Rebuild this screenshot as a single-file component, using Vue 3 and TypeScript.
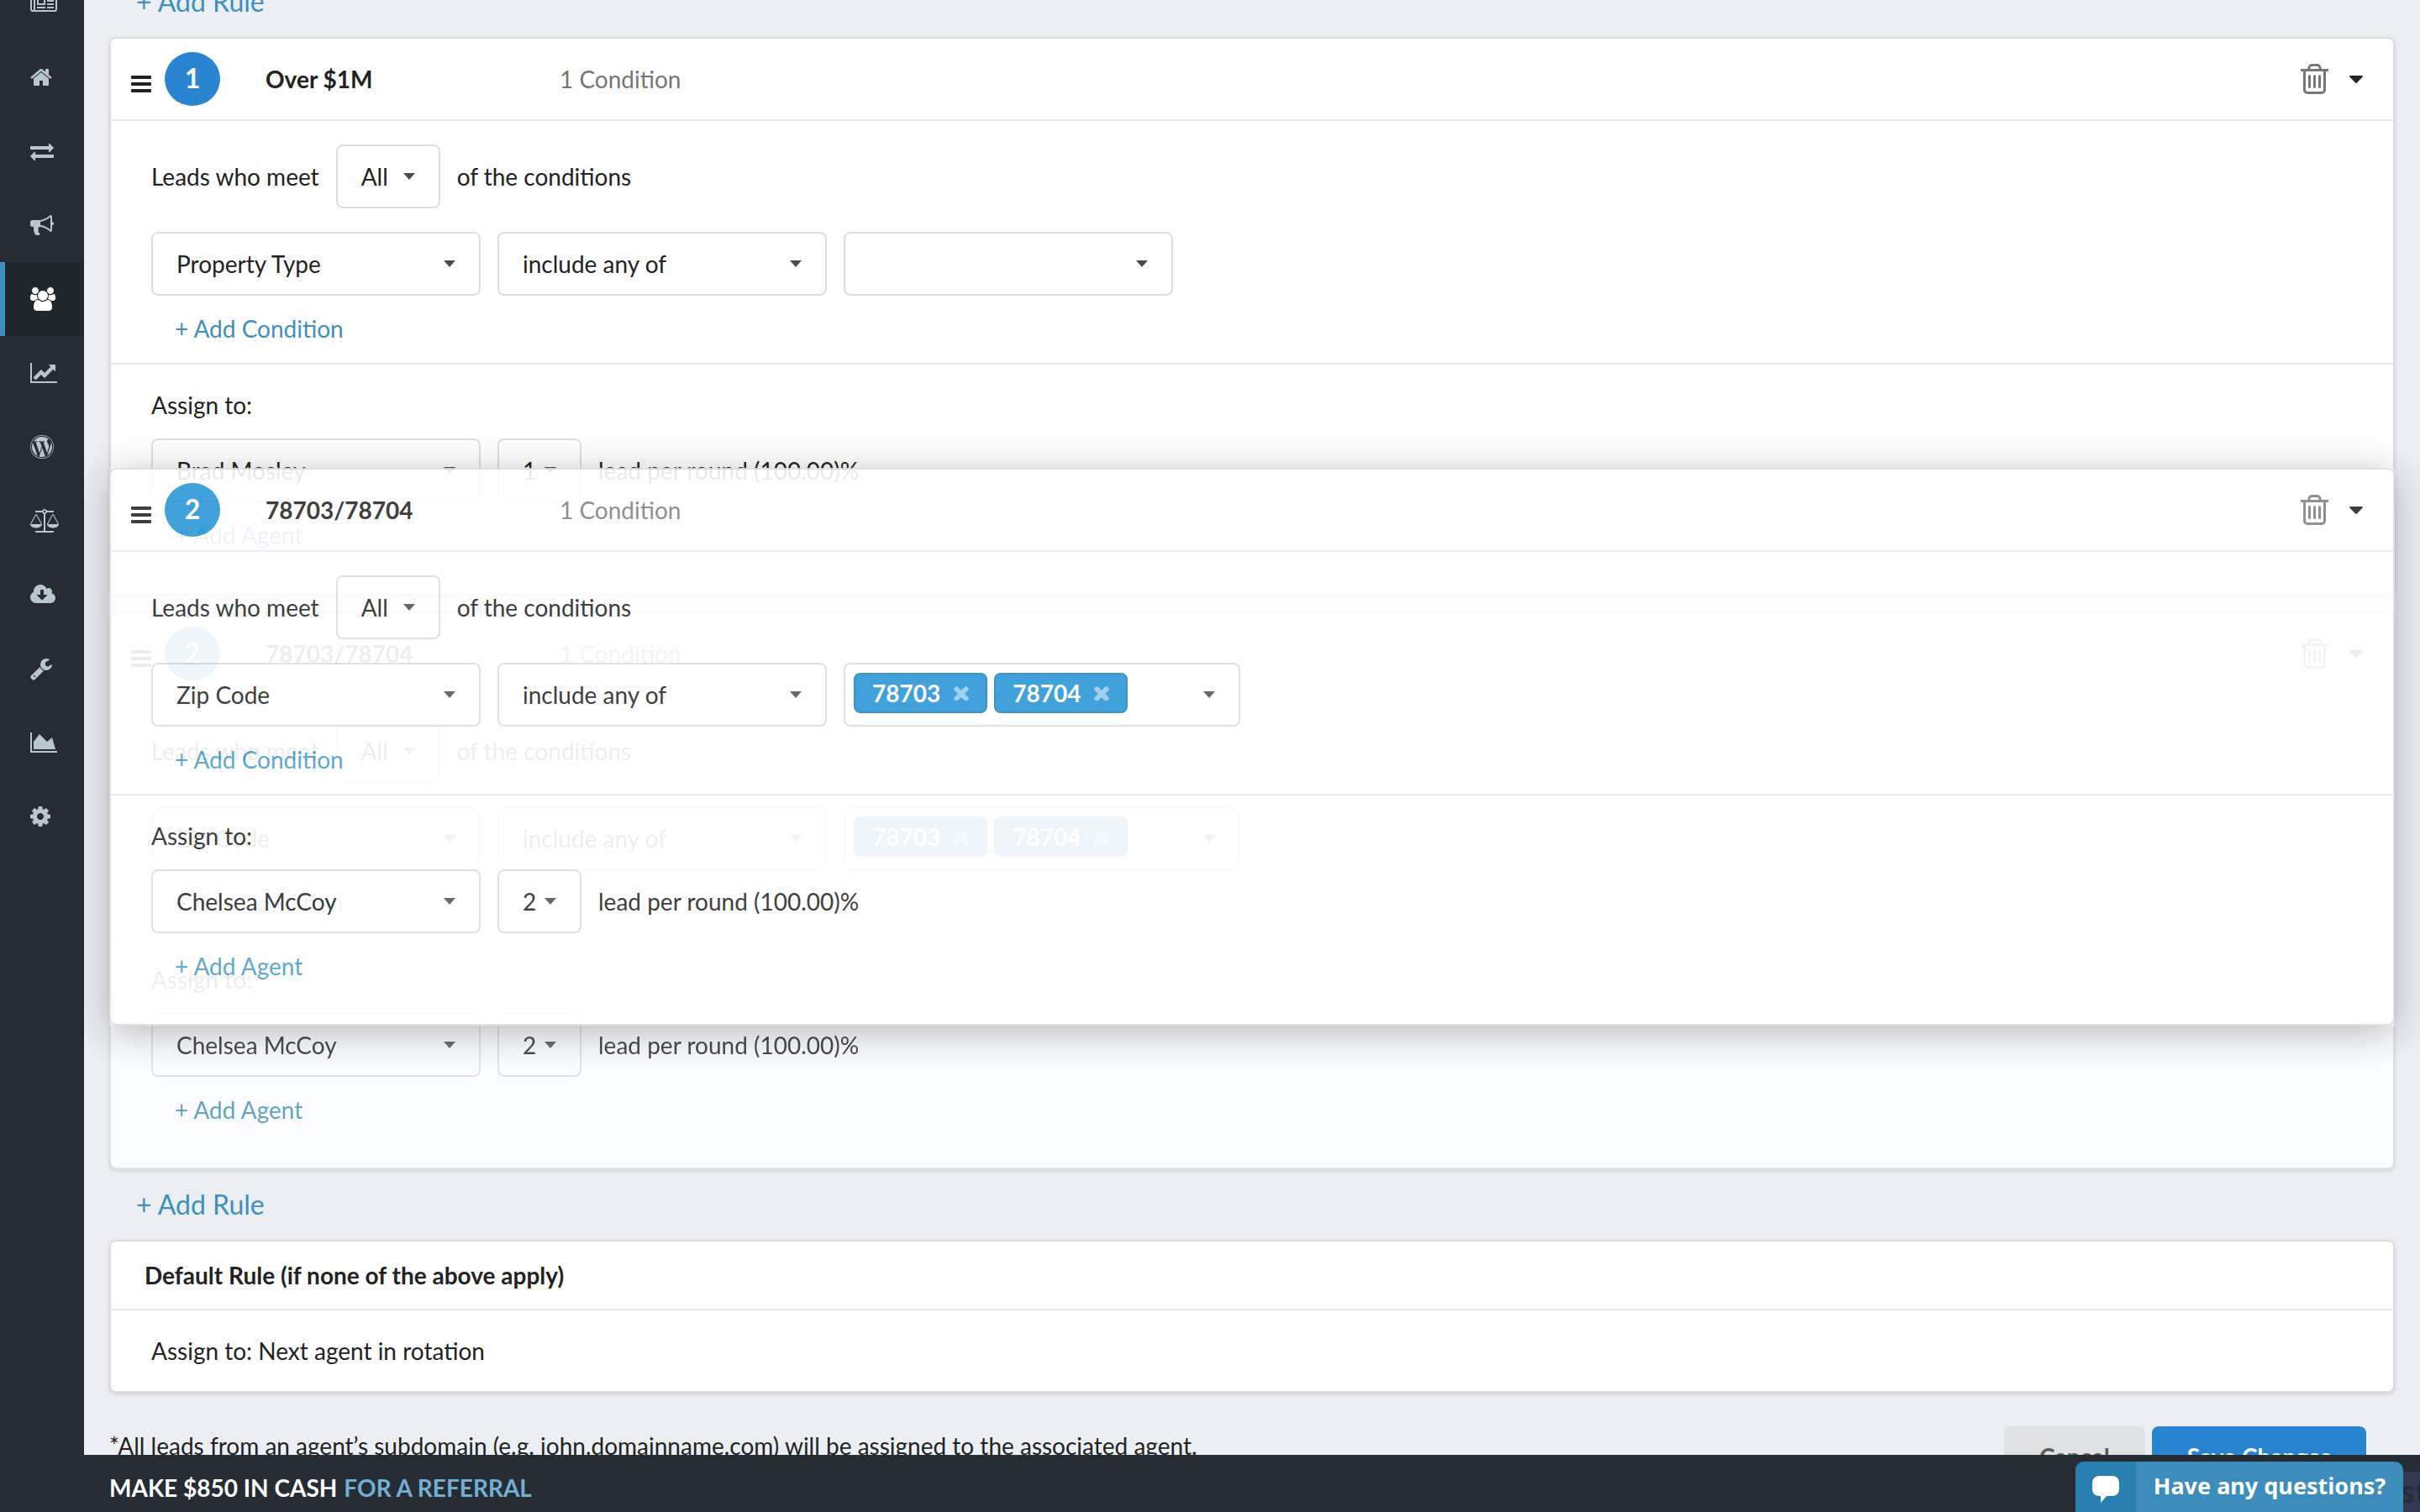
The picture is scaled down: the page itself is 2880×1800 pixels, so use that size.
<script setup lang="ts">
interface NavIcon {
  name: string
  box: string
  width: number
  path: string
  active?: boolean
}

interface Rule {
  key: string
  number: number
  title: string
  field: string
  operator: string
  tags: string[]
  agent: string
  weight: string
  state: 'idle' | 'placeholder' | 'dragging'
  top?: number
}

const icons: NavIcon[] = [
  {
    name: 'News',
    box: '0 0 2048 1792',
    width: 32,
    path: 'M1024 512h-384v384h384v-384zm128 640v128h-640v-128h640zm0-768v640h-640v-640h640zm640 768v128h-512v-128h512zm0-256v128h-512v-128h512zm0-256v128h-512v-128h512zm0-256v128h-512v-128h512zm-1536 960v-960h-128v960q0 26 19 45t45 19 45-19 19-45zm1664 0v-1088h-1536v1088q0 33-11 64h1483q26 0 45-19t19-45zm128-1216v1216q0 80-56 136t-136 56h-1664q-80 0-136-56t-56-136v-1088h256v-128h1792z',
  },
  {
    name: 'Home',
    box: '64 0 1664 1792',
    width: 26,
    path: 'M1472 992v480q0 26-19 45t-45 19h-384v-384h-256v384h-384q-26 0-45-19t-19-45v-480q0-1 .5-3t.5-3l575-474 575 474q1 2 1 6zm223-69l-62 74q-8 9-21 11h-3q-13 0-21-7l-692-577-692 577q-12 8-24 7-13-2-21-11l-62-74q-8-10-7-23.5t11-21.5l719-599q32-26 76-26t76 26l244 204v-195q0-14 9-23t23-9h192q14 0 23 9t9 23v408l219 182q10 8 11 21.5t-7 23.5z',
  },
  {
    name: 'Transactions',
    box: '0 0 1792 1792',
    width: 28,
    path: 'M1792 1184v192q0 13-9.5 22.5t-22.5 9.5h-1376v192q0 13-9.5 22.5t-22.5 9.5q-12 0-24-10l-319-320q-9-9-9-22 0-14 9-23l320-320q9-9 23-9 13 0 22.5 9.5t9.5 22.5v192h1376q13 0 22.5 9.5t9.5 22.5zm0-544q0 14-9 23l-320 320q-9 9-23 9-13 0-22.5-9.5t-9.5-22.5v-192h-1376q-13 0-22.5-9.5t-9.5-22.5v-192q0-13 9.5-22.5t22.5-9.5h1376v-192q0-14 9-23t23-9q12 0 24 10l319 319q9 9 9 23z',
  },
  {
    name: 'Campaigns',
    box: '0 0 1792 1792',
    width: 28,
    path: 'M1664 640q53 0 90.5 37.5t37.5 90.5-37.5 90.5-90.5 37.5v384q0 52-38 90t-90 38q-417-347-812-380-58 19-91 66t-31 100.5 40 92.5q-20 33-23 65.5t6 58 33.5 55 48 50 61.5 50.5q-29 58-111.5 83t-168.5 11.5-132-55.5q-7-23-29.5-87.5t-32-94.5-23-89-15-101 3.5-98.5 22-110.5h-122q-66 0-113-47t-47-113v-192q0-66 47-113t113-47h480q435 0 896-384 52 0 90 38t38 90v384zm-128 604v-954q-394 302-768 343v270q377 42 768 341z',
  },
  {
    name: 'Leads',
    box: '64 0 1920 1792',
    width: 30,
    active: true,
    path: 'M657 896q-162 5-265 128h-134q-82 0-138-40.5t-56-118.5q0-353 124-353 6 0 43.5 21t97.5 42.5 119 21.5q67 0 133-23-5 37-5 66 0 139 81 256zm1071 637q0 120-73 189.5t-194 69.5h-874q-121 0-194-69.5t-73-189.5q0-53 3.5-103.5t14-109 26.5-108.5 43-97.5 62-81 85.5-53.5 111.5-20q10 0 43 21.5t73 48 107 48 135 21.5 135-21.5 107-48 73-48 43-21.5q61 0 111.5 20t85.5 53.5 62 81 43 97.5 26.5 108.5 14 109 3.5 103.5zm-1024-1277q0 106-75 181t-181 75-181-75-75-181 75-181 181-75 181 75 75 181zm704 384q0 159-112.5 271.5t-271.5 112.5-271.5-112.5-112.5-271.5 112.5-271.5 271.5-112.5 271.5 112.5 112.5 271.5zm576 225q0 78-56 118.5t-138 40.5h-134q-103-123-265-128 81-117 81-256 0-29-5-66 66 23 133 23 59 0 119-21.5t97.5-42.5 43.5-21q124 0 124 353zm-128-609q0 106-75 181t-181 75-181-75-75-181 75-181 181-75 181 75 75 181z',
  },
  {
    name: 'Analytics',
    box: '0 0 2048 1792',
    width: 32,
    path: 'M2048 1536v128h-2048v-1536h128v1408h1920zm-128-1248v435q0 21-19.5 29.5t-35.5-7.5l-121-121-633 633q-10 10-23 10t-23-10l-233-233-416 416-192-192 585-585q10-10 23-10t23 10l233 233 464-464-121-121q-16-16-7.5-35.5t29.5-19.5h435q14 0 23 9t9 23z',
  },
  {
    name: 'WordPress',
    box: '0 0 1792 1792',
    width: 28,
    path: 'M127 896q0-163 67-313l367 1005q-196-95-315-281t-119-411zm1288-39q0 19-2.5 38.5t-10 49.5-11.5 44-17.5 59-17.5 58l-76 256-278-826q46-3 88-8 19-2 26-18.5t-2.5-31-28.5-13.5l-205 10q-75-1-202-10-12-1-20.5 5t-11.5 15-1.5 18.5 9 16.5 19.5 8l80 8 120 328-168 504-280-832q46-3 88-8 19-2 26-18.5t-2.5-31-28.5-13.5l-205 10q-7 0-23-.5t-26-.5q105-160 274.5-253.5t367.5-93.5q147 0 280.5 53t238.5 149h-10q-55 0-92 40.5t-37 95.5q0 12 2 24t4 21.5 8 23 9 21 12 22.5 12.5 21 14.5 24 14 23q63 107 63 212zm-506 106l237 647q1 6 5 11-126 44-255 44-112 0-217-32zm661-436q95 174 95 369 0 209-104 385.5t-279 278.5l235-678q59-169 59-276 0-42-6-79zm-674-527q182 0 348 71t286 191 191 286 71 348-71 348-191 286-286 191-348 71-348-71-286-191-191-286-71-348 71-348 191-286 286-191 348-71zm0 1751q173 0 331.5-68t273-182.5 182.5-273 68-331.5-68-331.5-182.5-273-273-182.5-331.5-68-331.5 68-273 182.5-182.5 273-68 331.5 68 331.5 182.5 273 273 182.5 331.5 68z',
  },
  {
    name: 'Compliance',
    box: '0 0 2176 1792',
    width: 34,
    path: 'M1728 448l-384 704h768zm-1280 0l-384 704h768zm821-192q-14 40-45.5 71.5t-71.5 45.5v1291h608q14 0 23 9t9 23v64q0 14-9 23t-23 9h-1344q-14 0-23-9t-9-23v-64q0-14 9-23t23-9h608v-1291q-40-14-71.5-45.5t-45.5-71.5h-491q-14 0-23-9t-9-23v-64q0-14 9-23t23-9h491q21-57 70-92.5t111-35.5 111 35.5 70 92.5h491q14 0 23 9t9 23v64q0 14-9 23t-23 9h-491zm-181 16q33 0 56.5-23.5t23.5-56.5-23.5-56.5-56.5-23.5-56.5 23.5-23.5 56.5 23.5 56.5 56.5 23.5zm1088 880q0 73-46.5 131t-117.5 91-144.5 49.5-139.5 16.5-139.5-16.5-144.5-49.5-117.5-91-46.5-131q0-11 35-81t92-174.5 107-195.5 102-184 56-100q18-33 56-33t56 33q4 7 56 100t102 184 107 195.5 92 174.5 35 81zm-1280 0q0 73-46.5 131t-117.5 91-144.5 49.5-139.5 16.5-139.5-16.5-144.5-49.5-117.5-91-46.5-131q0-11 35-81t92-174.5 107-195.5 102-184 56-100q18-33 56-33t56 33q4 7 56 100t102 184 107 195.5 92 174.5 35 81z',
  },
  {
    name: 'Downloads',
    box: '0 0 1920 1792',
    width: 30,
    path: 'M1280 928q0-14-9-23t-23-9h-224v-352q0-13-9.5-22.5t-22.5-9.5h-192q-13 0-22.5 9.5t-9.5 22.5v352h-224q-13 0-22.5 9.5t-9.5 22.5q0 14 9 23l352 352q9 9 23 9t23-9l351-351q10-12 10-24zm640 224q0 159-112.5 271.5t-271.5 112.5h-1088q-185 0-316.5-131.5t-131.5-316.5q0-130 70-240t188-165q-2-30-2-43 0-212 150-362t362-150q156 0 285.5 87t188.5 231q71-62 166-62 106 0 181 75t75 181q0 76-41 138 130 31 213.5 135.5t83.5 238.5z',
  },
  {
    name: 'Tools',
    box: '0 0 1664 1792',
    width: 26,
    path: 'M384 1472q0-26-19-45t-45-19-45 19-19 45 19 45 45 19 45-19 19-45zm644-420l-682 682q-37 37-90 37-52 0-91-37l-106-108q-38-36-38-90 0-53 38-91l681-681q39 98 114.5 173.5t173.5 114.5zm634-435q0 39-23 106-47 134-164.5 217.5t-258.5 83.5q-185 0-316.5-131.5t-131.5-316.5 131.5-316.5 316.5-131.5q58 0 121.5 16.5t107.5 46.5q16 11 16 28t-16 28l-293 169v224l193 107q5-3 79-48.5t135.5-81 70.5-35.5q15 0 23.5 10t8.5 25z',
  },
  {
    name: 'Reports',
    box: '0 0 2048 1792',
    width: 32,
    path: 'M2048 1536v128h-2048v-1536h128v1408h1920zm-384-1024l256 896h-1664v-576l448-576 576 576z',
  },
  {
    name: 'Settings',
    box: '0 0 1536 1792',
    width: 24,
    path: 'M1024 896q0-106-75-181t-181-75-181 75-75 181 75 181 181 75 181-75 75-181zm512-109v222q0 12-8 23t-20 13l-185 28q-19 54-39 91 35 50 107 138 10 12 10 25t-9 23q-27 37-99 108t-94 71q-12 0-26-9l-138-108q-44 23-91 38-16 136-29 186-7 28-36 28h-222q-14 0-24.5-8.5t-11.5-21.5l-28-184q-49-16-90-37l-141 107q-10 9-25 9-14 0-25-11-126-114-165-168-7-10-7-23 0-12 8-23 15-21 51-66.5t54-70.5q-27-50-41-99l-183-27q-13-2-21-12.5t-8-23.5v-222q0-12 8-23t19-13l186-28q14-46 39-92-40-57-107-138-10-12-10-24 0-10 9-23 26-36 98.5-107.5t94.5-71.5q13 0 26 10l138 107q44-23 91-38 16-136 29-186 7-28 36-28h222q14 0 24.5 8.5t11.5 21.5l28 184q49 16 90 37l142-107q9-9 24-9 13 0 25 10 129 119 165 170 7 8 7 22 0 12-8 23-15 21-51 66.5t-54 70.5q26 50 41 98l183 28q13 2 21 12.5t8 23.5z',
  },
]

const zipRule = {
  number: 2,
  title: '78703/78704',
  field: 'Zip Code',
  operator: 'include any of',
  tags: ['78703', '78704'],
  agent: 'Chelsea McCoy',
  weight: '2',
}

const rules: Rule[] = [
  {
    key: 'price',
    number: 1,
    title: 'Over $1M',
    field: 'Property Type',
    operator: 'include any of',
    tags: [],
    agent: 'Brad Mosley',
    weight: '1',
    state: 'idle',
  },
  { key: 'zip', ...zipRule, state: 'placeholder' },
  { key: 'zip-drag', ...zipRule, state: 'dragging', top: 513 },
]
</script>

<template>
  <div class="app">
    <nav class="sidebar" aria-label="Main">
      <a
        v-for="icon in icons"
        :key="icon.name"
        href="#"
        class="nav-item"
        :class="{ active: icon.active }"
        :aria-label="icon.name"
      >
        <svg :viewBox="icon.box" :width="icon.width" height="28"><path :d="icon.path" /></svg>
      </a>
    </nav>

    <main class="content">
      <a href="#" class="add-rule">+ Add Rule</a>

      <div class="rules">
        <div
          v-for="rule in rules"
          :key="rule.key"
          class="slot"
          :class="rule.state"
          :style="rule.top ? { top: rule.top + 'px' } : undefined"
        >
          <section class="card">
            <header class="rule-head">
              <svg class="grip" width="24" height="20" viewBox="0 0 24 20">
                <rect width="24" height="4" rx="1" />
                <rect y="8" width="24" height="4" rx="1" />
                <rect y="16" width="24" height="4" rx="1" />
              </svg>
              <span class="badge">{{ rule.number }}</span>
              <strong class="rule-title">{{ rule.title }}</strong>
              <span class="count">1 Condition</span>
              <button type="button" class="icon-btn" aria-label="Delete rule">
                <svg width="33" height="36" viewBox="0 0 33 36" fill="none" stroke="currentColor" stroke-width="3">
                  <path d="M0 7.500h33" />
                  <path d="M9.500 7C10 3.500 11 1.500 13 1.500h7c2 0 3 2 3.500 5.500" />
                  <path d="M4.500 8v23a3.500 3.500 0 0 0 3.500 3.500h17a3.500 3.500 0 0 0 3.500-3.500V8" />
                  <path d="M10.500 14.500v13M16.500 14.500v13M22.500 14.500v13" stroke-linecap="round" />
                </svg>
              </button>
              <button type="button" class="icon-btn" aria-label="Collapse rule">
                <svg width="16" height="9" viewBox="0 0 16 9"><path d="M1 0h14q1.500.5.5 1.700L9 8.500q-1 .8-2 0L.5 1.700Q-.5.500 1 0z" /></svg>
              </button>
            </header>

            <div class="conditions">
              <div class="row">
                <span>Leads who meet</span>
                <div class="dropdown match">
                  <select aria-label="Match"><option>All</option></select>
                  <svg class="caret" width="14" height="8" viewBox="0 0 14 8"><path d="M0 0h14L7 8z" /></svg>
                </div>
                <span>of the conditions</span>
              </div>
              <div class="row second">
                <div class="dropdown">
                  <select aria-label="Field"><option>{{ rule.field }}</option></select>
                  <svg class="caret" width="14" height="8" viewBox="0 0 14 8"><path d="M0 0h14L7 8z" /></svg>
                </div>
                <div class="dropdown">
                  <select aria-label="Operator"><option>{{ rule.operator }}</option></select>
                  <svg class="caret" width="14" height="8" viewBox="0 0 14 8"><path d="M0 0h14L7 8z" /></svg>
                </div>
                <div v-if="rule.tags.length" class="dropdown multi">
                  <span v-for="tag in rule.tags" :key="tag" class="tag">
                    {{ tag }}
                    <button type="button" class="tag-x" :aria-label="'Remove ' + tag">
                      <svg width="18" height="18" viewBox="302 302 1188 1188">
                        <path d="M1490 1322q0 40-28 68l-136 136q-28 28-68 28t-68-28l-294-294-294 294q-28 28-68 28t-68-28l-136-136q-28-28-28-68t28-68l294-294-294-294q-28-28-28-68t28-68l136-136q28-28 68-28t68 28l294 294 294-294q28-28 68-28t68 28l136 136q28 28 28 68t-28 68l-294 294 294 294q28 28 28 68z" />
                      </svg>
                    </button>
                  </span>
                  <svg class="caret" width="14" height="8" viewBox="0 0 14 8"><path d="M0 0h14L7 8z" /></svg>
                </div>
                <div v-else class="dropdown">
                  <select aria-label="Value"><option></option></select>
                  <svg class="caret" width="14" height="8" viewBox="0 0 14 8"><path d="M0 0h14L7 8z" /></svg>
                </div>
              </div>
              <a href="#" class="add-line">+ Add Condition</a>
            </div>

            <div class="assign">
              <p class="assign-label">Assign to:</p>
              <div class="row">
                <div class="dropdown">
                  <select aria-label="Agent"><option>{{ rule.agent }}</option></select>
                  <svg class="caret" width="14" height="8" viewBox="0 0 14 8"><path d="M0 0h14L7 8z" /></svg>
                </div>
                <div class="dropdown weight">
                  <select aria-label="Leads per round"><option>{{ rule.weight }}</option></select>
                  <svg class="caret" width="14" height="8" viewBox="0 0 14 8"><path d="M0 0h14L7 8z" /></svg>
                </div>
                <span>lead per round (100.00)%</span>
              </div>
              <a href="#" class="add-line">+ Add Agent</a>
            </div>
          </section>
        </div>
      </div>

      <a href="#" class="add-rule">+ Add Rule</a>

      <section class="card">
        <h2 class="default-title">Default Rule (if none of the above apply)</h2>
        <p class="default-body">Assign to: Next agent in rotation</p>
      </section>

      <div class="footer-row">
        <p class="note">*All leads from an agent’s subdomain (e.g. john.domainname.com) will be assigned to the associated agent.</p>
        <div class="actions">
          <button type="button" class="btn">Cancel</button>
          <button type="button" class="btn primary">Save Changes</button>
        </div>
      </div>
    </main>

    <footer class="promo">
      <span>MAKE $850 IN CASH</span>
      <a href="#">FOR A REFERRAL</a>
    </footer>
    <div class="side-tab">str</div>
    <button type="button" class="chat">
      <span class="chat-icon">
        <svg width="32" height="32" viewBox="0 0 32 32"><path d="M9 0h14q9 0 9 9v6q0 9-9 9h-6l-7 8v-8H9q-9 0-9-9V9q0-9 9-9z" /></svg>
      </span>
      <span class="chat-text">Have any questions?</span>
    </button>
  </div>
</template>

<style>
body {
  background: #ebeff4;
}
</style>

<style scoped>
.app {
  --ink: #222222;
  --muted: #767676;
  --caret: #4d4d4d;
  --link: #3f8fbd;
  --badge: #2a85d0;
  display: flex;
  position: relative;
  height: 100vh;
  overflow: hidden;
  background: #ebeff4;
  color: var(--ink);
  font-family: Lato, "Liberation Sans", sans-serif;
  font-size: 28px;
  line-height: 36px;
}

.app *,
.app *::before {
  box-sizing: border-box;
}

a {
  color: var(--link);
  text-decoration: none;
}

p,
h2 {
  margin: 0;
}

button,
select {
  font: inherit;
  color: inherit;
  border: 0;
  background: none;
  padding: 0;
  margin: 0;
}

.sidebar {
  flex: none;
  width: 100px;
  background: #252c33;
  display: flex;
  flex-direction: column;
}

.nav-item {
  flex: none;
  display: flex;
  align-items: center;
  height: 88px;
  padding-left: 30px;
  border-left: 6px solid transparent;
}

.nav-item:first-child {
  margin-top: -40px;
}

.nav-item svg {
  fill: #b8c7ce;
}

.nav-item.active {
  background: #1f272c;
  border-left-color: var(--link);
}

.nav-item.active svg {
  fill: #fff;
}

.content {
  flex: 1;
  min-width: 0;
  padding: 0 30px;
  margin-top: -40px;
}

.add-rule {
  display: block;
  width: max-content;
  height: 84px;
  padding-left: 32px;
  font-size: 32px;
  line-height: 84px;
}

.rules {
  position: relative;
  display: flex;
  flex-direction: column;
  gap: 20px;
}

.card {
  background: #fff;
  border: 2px solid #dededf;
  border-radius: 8px;
  box-shadow: 0 2px 4px rgba(34, 36, 38, 0.15);
}

.placeholder {
  opacity: 0.8;
}

.dragging {
  --ink: #2b2b2b;
  --muted: #848484;
  --caret: #595959;
  --link: #4da0ca;
  --badge: #2d98d7;
  position: absolute;
  left: 0;
  right: 0;
  color: var(--ink);
  opacity: 0.9;
  box-shadow: 0 8px 44px rgba(0, 0, 0, 0.3);
}

.dragging .card {
  box-shadow: none;
}

.rule-head {
  display: flex;
  align-items: center;
  height: 98px;
  padding: 0 36px 0 24px;
  border-bottom: 2px solid #e8e8e9;
}

.grip {
  flex: none;
  margin: 12px 16px 0 0;
  fill: var(--ink);
}

.badge {
  width: 66px;
  height: 64px;
  border-radius: 50%;
  background: var(--badge);
  color: #fff;
  font-size: 32px;
  font-weight: 700;
  line-height: 62px;
  text-align: center;
}

.rule-title {
  width: 350px;
  margin-left: 54px;
}

.count {
  flex: 1;
  color: var(--muted);
}

.icon-btn {
  display: flex;
  color: var(--muted);
}

.icon-btn + .icon-btn {
  margin-left: 25px;
  fill: var(--ink);
}

.conditions {
  padding: 28px 48px 0;
  border-bottom: 2px solid #e8e8e9;
}

.assign {
  padding: 30px 48px 28px;
}

.row {
  display: flex;
  align-items: center;
  gap: 20px;
}

.second {
  margin-top: 28px;
}

.assign-label {
  margin-bottom: 22px;
}

.dropdown {
  position: relative;
  width: 392px;
  height: 76px;
  border: 2px solid #dededf;
  border-radius: 8px;
  background: #fff;
}

.dropdown.match {
  width: 124px;
}

.dropdown.weight {
  width: 100px;
}

.dropdown select {
  width: 100%;
  height: 100%;
  padding-left: 28px;
  appearance: none;
}

.caret {
  position: absolute;
  right: 28px;
  top: 32px;
  fill: var(--caret);
  pointer-events: none;
}

.multi {
  display: flex;
  gap: 8px;
  width: 472px;
  padding: 10px;
}

.tag {
  display: flex;
  align-items: center;
  height: 48px;
  padding: 0 22px;
  border-radius: 8px;
  background: var(--badge);
  color: #fff;
  font-weight: 700;
}

.dragging .tag {
  box-shadow: inset 0 0 0 2px rgba(34, 36, 38, 0.15);
}

.tag-x {
  display: flex;
  margin-left: 16px;
  fill: #fff;
  opacity: 0.5;
}

.add-line {
  display: block;
  width: max-content;
  margin: 19px 0 21px 28px;
  line-height: 40px;
}

.default-title {
  height: 82px;
  padding-left: 40px;
  border-bottom: 2px solid #e8e8e9;
  font-size: 28px;
  line-height: 80px;
}

.default-body {
  padding-left: 48px;
  line-height: 96px;
}

.footer-row {
  display: flex;
  justify-content: space-between;
  margin-top: 40px;
  padding-right: 34px;
}

.note {
  line-height: 46px;
}

.actions {
  display: flex;
  gap: 8px;
}

.btn {
  height: 72px;
  padding: 0 42px;
  border-radius: 8px;
  background: #e0e1e2;
  color: #5a5a5a;
  font-weight: 700;
}

.btn.primary {
  background: #2a85d0;
  color: #fff;
}

.promo {
  position: absolute;
  left: 0;
  right: 0;
  bottom: 0;
  display: flex;
  gap: 8px;
  height: 68px;
  padding: 8px 0 0 130px;
  background: #252c33;
  color: #fff;
  font-weight: 700;
  line-height: 62px;
}

.promo a {
  color: #72afd2;
}

.side-tab {
  position: absolute;
  right: 0;
  bottom: 0;
  width: 24px;
  height: 48px;
  overflow: hidden;
  background: #323953;
  color: #252f38;
  font-family: "Open Sans", sans-serif;
  font-size: 36px;
  font-weight: 700;
  line-height: 48px;
}

.chat {
  position: absolute;
  right: 20px;
  bottom: 0;
  display: flex;
  width: 390px;
  height: 60px;
  border-radius: 10px 10px 0 0;
  overflow: hidden;
  background: #3c8dbc;
  color: #fff;
  font-family: "Noto Sans", sans-serif;
  font-size: 27px;
  font-weight: 700;
}

.chat-icon {
  width: 72px;
  height: 60px;
  padding: 17px 20px 0;
  background: #2980b0;
  fill: #fff;
}

.chat-icon svg {
  display: block;
}

.chat-text {
  flex: 1;
  line-height: 58px;
  text-align: center;
}
</style>
